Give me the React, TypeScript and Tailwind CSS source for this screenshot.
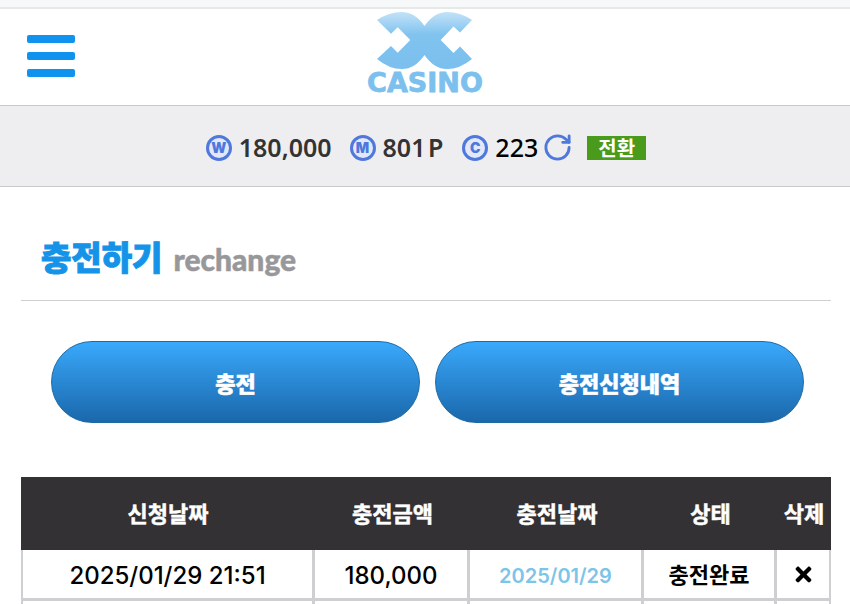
import { RotateCw } from "lucide-react";
import { FaTimes } from "react-icons/fa";

const kr = "font-['Noto_Sans_CJK_KR',sans-serif]";

function Coin({ letter }: { letter: string }) {
  return (
    <span className="flex h-[26px] w-[26px] shrink-0 items-center justify-center rounded-full border-[3px] border-[#4f78dc] bg-[#e3e8f8] font-['Inter',sans-serif] text-[14px] leading-none font-black text-[#4f78dc]">
      {letter}
    </span>
  );
}

function Logo() {
  return (
    <div className="flex flex-col items-center">
      <svg width="96" height="60" viewBox="378 12 96 60">
        <defs>
          <linearGradient id="lg" x1="0" y1="0" x2="0" y2="1">
            <stop offset="0" stopColor="#c3e2f8" />
            <stop offset="0.4" stopColor="#80c3ef" />
            <stop offset="1" stopColor="#7bbfee" />
          </linearGradient>
        </defs>
        <path
          fill="url(#lg)"
          d="M378,20 Q390,12 403,12 Q416,12 425.5,26 Q435,12 448,12 Q461,12 473,20 L461,32.5 L454.5,26.5 L441.7,40 L454.5,53 L461,46.5 L473,59 Q461,69 448,69 Q435,69 425.5,55 Q416,69 403,69 Q390,69 378,59 L392,46 L398.7,52.7 L411.3,40 L398.7,27.3 L392,33.7 Z"
        />
      </svg>
      <span className="font-['DejaVu_Sans',sans-serif] text-[27px] leading-[21px] font-bold text-[#7cc0ee] [-webkit-text-stroke:0.8px_#7cc0ee]">
        CASINO
      </span>
    </div>
  );
}

function Cell({ children, className = "" }: { children?: React.ReactNode; className?: string }) {
  return (
    <td
      className={`border-r-[3px] border-b-[3px] border-[#cfcfd1] p-0 text-center align-middle first:border-l-[2px] last:border-r-[2px] ${className}`}
    >
      {children}
    </td>
  );
}

function Head({ children }: { children: React.ReactNode }) {
  return (
    <th className={`p-0 pb-[2px] text-center align-middle ${kr} text-[22px] font-bold text-white [-webkit-text-stroke:0.5px_#ffffff]`}>
      {children}
    </th>
  );
}

export default function App() {
  return (
    <div className="flex h-[604px] w-[850px] flex-col overflow-hidden bg-white">
      <div className="h-[9px] shrink-0 border-b-2 border-[#e6e8ea] bg-[#f7f8f9]" />
      <header className="relative flex h-[97px] shrink-0 items-start justify-center border-b border-[#c9c9cb] pt-[3px]">
        <div className="absolute top-[26px] left-[27px] flex w-[48px] flex-col gap-[9px]">
          <span className="h-[8px] rounded-[2px] bg-[#0f93ee]" />
          <span className="h-[8px] rounded-[2px] bg-[#0f93ee]" />
          <span className="h-[8px] rounded-[2px] bg-[#0f93ee]" />
        </div>
        <Logo />
      </header>
      <div className="flex h-[81px] shrink-0 items-center justify-center border-b border-[#c9c9cb] bg-[#eeeef0] pt-[3px] pl-[2px]">
        <Coin letter="W" />
        <span className="ml-[7px] font-['Noto_Sans',sans-serif] text-[25px] font-semibold text-[#333]">180,000</span>
        <span className="ml-[18px]"><Coin letter="M" /></span>
        <span className="ml-[7px] font-['Noto_Sans',sans-serif] text-[25px] font-semibold text-[#333] [word-spacing:-4px]">801 P</span>
        <span className="ml-[19px]"><Coin letter="C" /></span>
        <span className="ml-[7px] font-['Noto_Sans',sans-serif] text-[25px] font-medium text-black">223</span>
        <RotateCw size={31} strokeWidth={2.2} className="ml-[4px] text-[#4f78dc]" />
        <span className={`ml-[14px] flex h-[24px] w-[59px] items-center justify-center bg-[#4a9a1c] ${kr} text-[20px] leading-none font-bold text-white`}>
          전환
        </span>
      </div>
      <div className="flex h-[114px] shrink-0 items-end pr-[19px] pl-[21px]">
        <div className="flex w-full items-end border-b border-[#cfcfd1] pb-[24px] pl-[20px]">
          <span className={`${kr} text-[33px] leading-[40px] font-black text-[#1593e8] [-webkit-text-stroke:1px_#1593e8]`}>충전하기</span>
          <span className="ml-[11px] font-['Lato',sans-serif] text-[30px] leading-[34px] font-black text-[#98989a] [-webkit-text-stroke:0.5px_#98989a]">rechange</span>
        </div>
      </div>
      <div className="flex shrink-0 gap-[15px] pt-[40px] pl-[51px]">
        <button className={`h-[82px] w-[369px] rounded-full border border-[#1e6aa5] bg-gradient-to-b from-[#3aa9fc] to-[#1a68ab] ${kr} text-[22px] font-black text-white [-webkit-text-stroke:0.5px_#ffffff]`}>
          충전
        </button>
        <button className={`h-[82px] w-[369px] rounded-full border border-[#1e6aa5] bg-gradient-to-b from-[#3aa9fc] to-[#1a68ab] ${kr} text-[22px] font-black text-white [-webkit-text-stroke:0.5px_#ffffff]`}>
          충전신청내역
        </button>
      </div>
      <div className="mt-[54px] shrink-0 pl-[21px]">
        <table className="w-[810px] table-fixed border-separate border-spacing-0">
          <colgroup>
            <col className="w-[294px]" />
            <col className="w-[155px]" />
            <col className="w-[174px]" />
            <col className="w-[133px]" />
            <col className="w-[54px]" />
          </colgroup>
          <thead>
            <tr className="h-[73px] bg-[#333133]">
              <Head>신청날짜</Head>
              <Head>충전금액</Head>
              <Head>충전날짜</Head>
              <Head>상태</Head>
              <Head>삭제</Head>
            </tr>
          </thead>
          <tbody>
            <tr className="h-[51px]">
              <Cell className="pt-[3px] font-['Inter',sans-serif] text-[24px] font-medium text-black">2025/01/29 21:51</Cell>
              <Cell className="pt-[3px] font-['Inter',sans-serif] text-[24px] font-medium text-black">180,000</Cell>
              <Cell className="pt-[3px] font-['Inter',sans-serif] text-[20px] font-semibold text-[#7cc4e8]">2025/01/29</Cell>
              <Cell className={`pb-[2px] ${kr} text-[22px] font-bold text-black`}>충전완료</Cell>
              <Cell>
                <FaTimes size={23} className="mx-auto text-black" />
              </Cell>
            </tr>
            <tr className="h-[30px]">
              <Cell />
              <Cell />
              <Cell />
              <Cell />
              <Cell />
            </tr>
          </tbody>
        </table>
      </div>
    </div>
  );
}
